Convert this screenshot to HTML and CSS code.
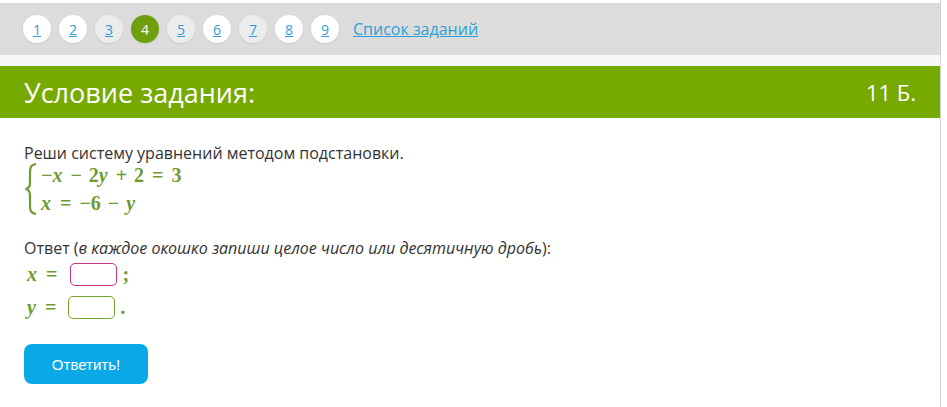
FILE: index.html
```html
<!DOCTYPE html>
<html lang="ru">
<head>
    <meta charset="UTF-8">
    <title>Условие задания</title>
    <link rel="stylesheet" href="styles.css">
</head>
<body>
    <div class="page">
        <div class="nav">
            <a class="num white" href="#">1</a>
            <a class="num white" href="#">2</a>
            <a class="num grey" href="#">3</a>
            <span class="num current">4</span>
            <a class="num grey" href="#">5</a>
            <a class="num white" href="#">6</a>
            <a class="num grey" href="#">7</a>
            <a class="num white" href="#">8</a>
            <a class="num white" href="#">9</a>
            <a class="tasks" href="#">Список заданий</a>
        </div>
        <div class="gap"></div>
        <div class="header">
            <h1>Условие задания:</h1>
            <span class="score">11 Б.</span>
        </div>
        <div class="content">
            <p class="task">Реши систему уравнений методом подстановки.</p>
            <div class="system">
                <svg class="brace" width="14" height="52" viewBox="0 0 14 52">
                    <path d="M12 1 C7 2 6 4 6 9 L6 20 C6 24 4 25.5 1.5 26 C4 26.5 6 28 6 32 L6 43 C6 48 7 50 12 51" fill="none" stroke="#6e9a32" stroke-width="2.2"/>
                </svg>
                <div class="lines">
                    <div class="math">−<i>x</i><b class="op">−</b>2<i>y</i><b class="op">+</b>2<b class="rel">=</b>3</div>
                    <div class="math"><i>x</i><b class="rel">=</b>−6<b class="op">−</b><i>y</i></div>
                </div>
            </div>
            <p class="answer">Ответ (<em>в каждое окошко запиши целое число или десятичную дробь</em>):</p>
            <div class="row">
                <span class="math"><i>x</i><b class="rel">=</b></span>
                <input class="box pink" type="text">
                <span class="math">;</span>
            </div>
            <div class="row">
                <span class="math"><i>y</i><b class="rel">=</b></span>
                <input class="box green" type="text">
                <span class="math">.</span>
            </div>
            <button class="submit">Ответить!</button>
        </div>
    </div>
</body>
</html>
```

FILE: styles.css
```css
body {
    margin: 0;
    background: #fff;
    font-family: "Open Sans", Arial, sans-serif;
    color: #333;
}

.page {
    width: 941px;
    min-height: 407px;
    border-right: 1px solid #d3d3d3;
    padding-top: 3px;
    box-sizing: border-box;
}

.nav {
    height: 52px;
    background: #dcdcdc;
    display: flex;
    align-items: center;
    gap: 8px;
    padding-left: 23px;
}

.num {
    width: 28px;
    height: 28px;
    border-radius: 50%;
    display: flex;
    align-items: center;
    justify-content: center;
    font-size: 14px;
    color: #2f9fd8;
    text-decoration: underline;
    box-shadow: 0 1px 2px rgba(0, 0, 0, 0.08);
}

.white {
    background: #fff;
}

.grey {
    background: #ececec;
}

.current {
    background: #6f9f0e;
    color: #fff;
    text-decoration: none;
}

.tasks {
    margin-left: 6px;
    font-size: 16px;
    color: #2f9fd8;
}

.gap {
    height: 11px;
    background: #f7f7f7;
}

.header {
    height: 52px;
    background: #76a902;
    color: #fff;
    display: flex;
    align-items: center;
    justify-content: space-between;
    padding: 0 24px;
}

.header h1 {
    margin: 0;
    font-size: 27px;
    font-weight: normal;
}

.score {
    font-size: 22px;
}

.content {
    padding: 24px 24px 0;
}

.task, .answer {
    margin: 0;
    font-size: 16px;
    line-height: 22px;
}

.system {
    display: flex;
    align-items: center;
    gap: 3px;
    margin-top: -1px;
}

.lines {
    display: flex;
    flex-direction: column;
    gap: 5px;
}

.math {
    font-family: "Liberation Serif", "DejaVu Serif", serif;
    font-weight: bold;
    font-size: 20px;
    color: #6e9a32;
    line-height: 23px;
    white-space: pre;
}

.math i {
    font-style: italic;
    padding-right: 1px;
}

.op {
    margin: 0 7px;
}

.rel {
    margin: 0 8px;
}

.answer {
    margin-top: 22px;
}

.row {
    display: flex;
    align-items: center;
    gap: 5px;
    margin-left: 3px;
    height: 30px;
}

.row + .row {
    margin-top: 3px;
}

.box {
    width: 47px;
    height: 23px;
    box-sizing: border-box;
    border-radius: 5px;
    border: 1px solid;
    outline: none;
    padding: 0;
}

.pink {
    border-color: #c2357e;
}

.green {
    border-color: #7aa231;
    margin-left: -1px;
}

.submit {
    margin-top: 22px;
    width: 124px;
    height: 40px;
    border: none;
    border-radius: 8px;
    background: #0aa8e6;
    color: #fff;
    font-family: "Liberation Sans", Arial, sans-serif;
    font-size: 15px;
}
```
